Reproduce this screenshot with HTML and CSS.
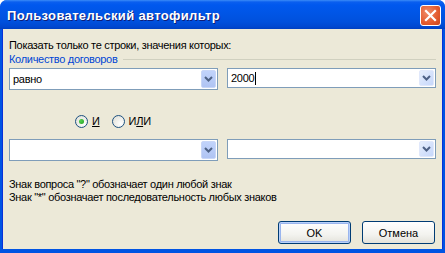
FILE: index.html
```html
<!DOCTYPE html>
<html lang="ru">
<head>
    <meta charset="UTF-8">
    <title>Пользовательский автофильтр</title>
    <link rel="stylesheet" href="styles.css">
</head>
<body>
    <div class="window">
        <!-- Title bar -->
        <div class="titlebar">
            <span class="title">Пользовательский автофильтр</span>
            <div class="close">
                <svg width="13" height="13" viewBox="0 0 13 13">
                    <path d="M2 2 L11 11 M11 2 L2 11" stroke="#fff" stroke-width="2.2" stroke-linecap="square"/>
                </svg>
            </div>
        </div>

        <!-- Dialog body -->
        <div class="content">
            <div class="prompt">Показать только те строки, значения которых:</div>
            <div class="group">
                <span class="group-label">Количество договоров</span>
                <span class="group-line"></span>
            </div>

            <div class="row">
                <div class="combo tall">
                    <span class="value">равно</span>
                    <span class="drop dark"><svg width="9" height="6" viewBox="0 0 9 6"><path d="M1 1 L4.5 4.5 L8 1" fill="none" stroke="#4d6185" stroke-width="2"/></svg></span>
                </div>
                <div class="combo">
                    <span class="value">2000<span class="caret"></span></span>
                    <span class="drop"><svg width="9" height="6" viewBox="0 0 9 6"><path d="M1 1 L4.5 4.5 L8 1" fill="none" stroke="#4d6185" stroke-width="2"/></svg></span>
                </div>
            </div>

            <div class="radios">
                <label class="radio"><span class="circle checked"></span><span><u>И</u></span></label>
                <label class="radio"><span class="circle"></span><span>И<u>Л</u>И</span></label>
            </div>

            <div class="row">
                <div class="combo tall">
                    <span class="value"></span>
                    <span class="drop dark"><svg width="9" height="6" viewBox="0 0 9 6"><path d="M1 1 L4.5 4.5 L8 1" fill="none" stroke="#4d6185" stroke-width="2"/></svg></span>
                </div>
                <div class="combo">
                    <span class="value"></span>
                    <span class="drop"><svg width="9" height="6" viewBox="0 0 9 6"><path d="M1 1 L4.5 4.5 L8 1" fill="none" stroke="#4d6185" stroke-width="2"/></svg></span>
                </div>
            </div>

            <div class="notes">
                <div>Знак вопроса "?" обозначает один любой знак</div>
                <div>Знак "*" обозначает последовательность любых знаков</div>
            </div>

            <div class="buttons">
                <button class="btn default">OK</button>
                <button class="btn">Отмена</button>
            </div>
        </div>
    </div>
</body>
</html>
```

FILE: styles.css
```css
body {
    margin: 0;
    background-color: #ffffff;
    font-family: Tahoma, "Liberation Sans", Arial, sans-serif;
    font-size: 11px;
    letter-spacing: -0.3px;
    color: #000;
}

.window {
    width: 445px;
    height: 253px;
    display: flex;
    flex-direction: column;
    background-color: #0054e3;
    border-radius: 7px 7px 0 0;
    overflow: hidden;
}

.titlebar {
    height: 29px;
    display: flex;
    align-items: center;
    justify-content: space-between;
    padding: 0 4px 0 7px;
    background: linear-gradient(to bottom, #3b8cf7 0px, #0a5fef 2px, #0058ee 5px, #0055e5 14px, #0050dc 22px, #0047cf 27px, #0040c0 29px);
}

.title {
    color: #fff;
    font-family: "Liberation Sans", Arial, sans-serif;
    font-weight: bold;
    font-size: 13px;
    letter-spacing: 0.35px;
    text-shadow: 1px 1px 0 #0f1d77;
    margin-top: 1px;
}

.close {
    width: 21px;
    height: 21px;
    box-sizing: border-box;
    border: 1px solid #fff;
    border-radius: 3px;
    background: radial-gradient(circle at 35% 35%, #f08d6a, #e35a2e 60%, #c9441c);
    display: flex;
    align-items: center;
    justify-content: center;
    margin-top: 1px;
}

.content {
    flex: 1;
    margin: 0 3px 4px 3px;
    background-color: #ece9d8;
    padding: 10px 6px 0 6px;
    display: flex;
    flex-direction: column;
    box-shadow: -1px 0 0 #0831d9, 1px 0 0 #0831d9;
}

.prompt {
    line-height: 13px;
}

.group {
    display: flex;
    align-items: center;
    margin-top: 1px;
    line-height: 13px;
}

.group-label {
    color: #0046d5;
    margin-right: 6px;
}

.group-line {
    flex: 1;
    height: 1px;
    background-color: #d0d0bf;
}

.row {
    display: flex;
    justify-content: space-between;
    margin-top: 2px;
    align-items: flex-start;
}

.combo {
    width: 209px;
    height: 20px;
    box-sizing: border-box;
    border: 1px solid #7f9db9;
    background-color: #fff;
    display: flex;
    align-items: center;
    padding: 1px;
}

.combo.tall {
    height: 22px;
}

.combo .value {
    flex: 1;
    padding-left: 2px;
    display: flex;
    align-items: center;
}

.caret {
    display: inline-block;
    width: 1px;
    height: 13px;
    background-color: #000;
    margin-left: 1px;
}

.drop {
    width: 15px;
    height: 16px;
    box-sizing: border-box;
    border: 1px solid #e0e8fb;
    border-radius: 2px;
    background: linear-gradient(to bottom right, #e6eefc, #c6d7fb);
    display: flex;
    align-items: center;
    justify-content: center;
}

.drop.dark {
    height: 18px;
    border-color: #c8d6f7;
    background: linear-gradient(to bottom, #c1d3fb, #b0c4f3);
}

.radios {
    display: flex;
    gap: 12px;
    padding-left: 66px;
    margin-top: 24px;
}

.radio {
    display: flex;
    align-items: center;
    gap: 4px;
    height: 14px;
}

.circle {
    width: 13px;
    height: 13px;
    box-sizing: border-box;
    border-radius: 50%;
    border: 1px solid #1c5180;
    background: radial-gradient(circle at 70% 70%, #ffffff, #dcdcd2);
    display: flex;
    align-items: center;
    justify-content: center;
}

.circle.checked::after {
    content: "";
    width: 5px;
    height: 5px;
    border-radius: 50%;
    background: radial-gradient(circle at 35% 35%, #55d051, #21a121);
}

.radios + .row {
    margin-top: 11px;
}

.notes {
    margin-top: 17px;
    line-height: 13px;
}

.buttons {
    display: flex;
    justify-content: flex-end;
    gap: 11px;
    margin-top: 17px;
    padding-right: 1px;
}

.btn {
    width: 73px;
    height: 23px;
    font-family: Tahoma, "Liberation Sans", Arial, sans-serif;
    font-size: 11px;
    color: #000;
    border: 1px solid #003c74;
    border-radius: 3px;
    background: linear-gradient(to bottom, #ffffff, #f3f3ef 60%, #e3e2da);
    padding: 0;
}

.btn.default {
    box-shadow: inset 0 0 0 1px #b9d1fa, inset 0 0 0 2px #9ab5ee;
}
```
